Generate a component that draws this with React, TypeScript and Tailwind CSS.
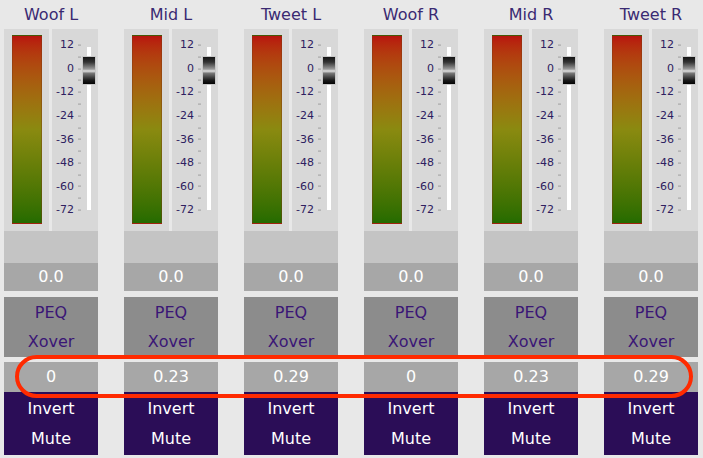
import React from 'react'

const channels = [
  { name: 'Woof L', delay: '0' },
  { name: 'Mid L', delay: '0.23' },
  { name: 'Tweet L', delay: '0.29' },
  { name: 'Woof R', delay: '0' },
  { name: 'Mid R', delay: '0.23' },
  { name: 'Tweet R', delay: '0.29' },
]

const scale = ['12', '0', '-12', '-24', '-36', '-48', '-60', '-72']

function Fader() {
  // ticks, track and knob drawn in panel-local coords (46 x 202)
  const step = 165 / 7
  const ticks: number[] = []
  for (let i = 0; i <= 14; i++) ticks.push(16 + (i * step) / 2)
  return (
    <svg className="absolute inset-0" width="46" height="202" viewBox="0 0 46 202">
      <defs>
        <linearGradient id="knob" x1="0" y1="0" x2="0" y2="1">
          <stop offset="0" stopColor="#111" />
          <stop offset="0.2" stopColor="#333" />
          <stop offset="0.45" stopColor="#9a9a9a" />
          <stop offset="0.52" stopColor="#e0e0e0" />
          <stop offset="0.6" stopColor="#777" />
          <stop offset="0.85" stopColor="#1a1a1a" />
          <stop offset="1" stopColor="#000" />
        </linearGradient>
      </defs>
      {ticks.map((y, i) => (
        <rect key={i} x="26" y={Math.round(y) - 0.5} width="3" height="1.2" fill="#a8a8a8" />
      ))}
      <rect x="35" y="18" width="4" height="163" fill="#ffffff" />
      <rect x="30.5" y="27.5" width="13" height="28" fill="url(#knob)" stroke="#c8c8c8" strokeWidth="1" />
    </svg>
  )
}

function Strip({ name, delay }: { name: string; delay: string }) {
  return (
    <div className="flex w-[94px] shrink-0 flex-col">
      <div className="flex h-[29px] items-center justify-center text-[16px] text-[#3a2a72]">{name}</div>
      <div className="flex h-[202px] gap-[3px]">
        <div className="flex w-[45px] justify-center bg-[#d8d8d8] pt-[6px]">
          <div className="h-[189px] w-[30px] border border-[#7a3a10]/40 bg-gradient-to-b from-[#b8120e] via-[#8a8a10] to-[#236b00]" />
        </div>
        <div className="relative w-[46px] bg-[#d8d8d8]">
          <div className="flex flex-col pt-[4px] pr-[24px]">
            {scale.map((s) => (
              <div key={s} className="flex h-[23.57px] items-center justify-end text-[11px] leading-none text-[#2e2060]">
                {s}
              </div>
            ))}
          </div>
          <Fader />
        </div>
      </div>
      <div className="h-[32px] bg-[#c4c4c4]" />
      <div className="flex h-[28px] items-center justify-center bg-[#a7a7a7] text-[16px] text-white">0.0</div>
      <div className="mt-[6px] flex h-[60px] flex-col items-center justify-center bg-[#8c8c8c] text-[16px] leading-[29px] text-[#3a1676]">
        <span>PEQ</span>
        <span>Xover</span>
      </div>
      <div className="mt-[5px] flex h-[30px] items-center justify-center bg-[#a7a7a7] text-[16px] text-white">{delay}</div>
      <div className="flex h-[63px] flex-col items-center justify-center bg-[#2b0d57] text-[16px] leading-[30px] text-white">
        <span>Invert</span>
        <span>Mute</span>
      </div>
    </div>
  )
}

export default function App() {
  return (
    <div className="relative h-[458px] w-[703px] overflow-hidden bg-[#e8e8e8] font-['DejaVu_Sans',sans-serif]">
      <div className="flex gap-[26px] pl-[4px]">
        {channels.map((c) => (
          <Strip key={c.name} name={c.name} delay={c.delay} />
        ))}
      </div>
      {/* annotation highlight over the delay row */}
      <div className="absolute left-[15px] top-[355px] h-[43px] w-[678px] rounded-[22px] border-[4px] border-[#ff2a00]" />
    </div>
  )
}
